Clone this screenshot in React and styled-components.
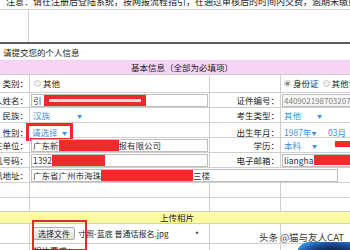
import React from 'react';
import styled, { createGlobalStyle } from 'styled-components';

const GlobalStyle = createGlobalStyle`
  html, body {
    margin: 0;
    padding: 0;
    background: #fff;
    overflow: hidden;
  }
  body {
    width: 350px;
    height: 250px;
    font-family: "Noto Sans CJK SC", "Noto Sans", sans-serif;
    font-size: 8.5px;
    color: #222;
  }
`;

const LINE = '#cfcfcf';

const Page = styled.div`
  position: relative;
  width: 350px;
  height: 250px;
  overflow: hidden;
`;

const Notice = styled.div`
  height: 14px;
  margin-top: -5px;
  padding-left: 6px;
  line-height: 14px;
  font-size: 9px;
  white-space: nowrap;
  border-bottom: 1px solid ${LINE};
`;

const UpperBlock = styled.div`
  display: grid;
  grid-template-columns: 29px 1fr;
  height: 32px;
  > div:first-child {
    border-right: 1px solid ${LINE};
  }
`;

const DarkRule = styled.div`
  height: 2px;
  background: #5c5c5c;
`;

const Intro = styled.div`
  height: 16px;
  line-height: 16px;
  padding-left: 3px;
  border-bottom: 1px solid #ead0ea;
`;

const Form = styled.div`
  margin-left: -30px;
  width: 410px;
`;

const Bar = styled.div`
  height: ${(p) => p.$h}px;
  line-height: ${(p) => p.$h}px;
  background: ${(p) => p.$bg};
  text-align: center;
  padding-left: ${(p) => p.$shift || 0}px;
  border-bottom: 1px solid ${LINE};
`;

const Row = styled.div`
  display: grid;
  grid-template-columns: 60px 180px 71px 1fr;
  height: ${(p) => p.$h || 14}px;
  border-bottom: 1px solid ${LINE};
`;

const Cell = styled.div`
  position: relative;
  display: flex;
  align-items: ${(p) => p.$align || 'center'};
  gap: ${(p) => p.$gap || 0}px;
  padding: 0 ${(p) => p.$pad ?? 3}px;
  border-right: 1px solid ${LINE};
  white-space: nowrap;
  grid-column: ${(p) => p.$span || 'auto'};
  min-width: 0;
`;

const Label = styled(Cell)`
  justify-content: flex-end;
  padding: 0 1px 0 0;
  overflow: hidden;
`;

const Radio = styled.span`
  display: inline-flex;
  align-items: center;
  gap: 2px;
  margin-right: 4px;
  &::before {
    content: '';
    width: 5px;
    height: 5px;
    border-radius: 50%;
    border: 1px solid #c8c8c8;
    background: ${(p) => (p.$on ? 'radial-gradient(circle, #8a8a8a 0 45%, #e8e8e8 55%)' : '#f2f2f2')};
  }
`;

const Select = styled.span`
  display: inline-flex;
  align-items: center;
  width: ${(p) => p.$w}px;
  color: #3d8fdb;
  &::after {
    content: '▼';
    font-size: 5px;
    margin-left: auto;
  }
`;

const Field = styled.div`
  display: flex;
  align-items: center;
  width: ${(p) => p.$w}px;
  height: 11px;
  border: 1px solid #bdbdbd;
  background: ${(p) => (p.$muted ? '#f7f7f7' : '#fff')};
  color: ${(p) => (p.$muted ? '#808080' : '#333')};
  font-size: ${(p) => (p.$muted ? 8 : 8.5)}px;
  padding-left: 1px;
  overflow: hidden;
  white-space: nowrap;
  margin-left: ${(p) => p.$ml || 0}px;
`;

const Redact = styled.span`
  display: inline-block;
  flex: none;
  width: ${(p) => p.$w}px;
  height: ${(p) => p.$h || 11}px;
  background: #ef2b2b;
  margin-top: ${(p) => p.$mt || 0}px;
`;

const NameRedact = styled.span`
  display: flex;
  align-items: center;
  justify-content: center;
  flex: none;
  width: 102px;
  height: 12px;
  margin: 0 0 0 2px;
  background: #ec2a2a;
  &::after {
    content: '';
    width: 92px;
    height: 3px;
    background: #f6d9d3;
  }
`;

const Marked = styled.span`
  display: inline-flex;
  align-items: center;
  box-sizing: border-box;
  height: 18px;
  padding: 0 3px;
  margin: 0 0 0 -7px;
  border: 3px solid #ee2a2a;
  background: #fff;
`;

const FileButton = styled.span`
  display: inline-flex;
  align-items: center;
  height: 11px;
  padding: 0 4px;
  border: 1px solid #a9a9a9;
  border-radius: 2px;
  background: linear-gradient(#f6f6f6, #dedede);
  font-size: 8px;
  color: #222;
`;

const FileName = styled.span`
  margin-left: 3px;
  font-size: 8px;
`;

const Star = styled.span`
  margin-left: auto;
  padding-right: 7px;
`;

const Outline = styled.span`
  position: absolute;
  left: 2px;
  top: -4px;
  width: 51px;
  height: 27px;
  border: 2px solid #e6262b;
  pointer-events: none;
`;

const Watermark = styled.div`
  position: absolute;
  left: 259px;
  top: 230px;
  font-size: 9.5px;
  color: #3c3c3c;
  text-shadow: 0 0 2px #fff;
  white-space: nowrap;
`;

const Avatar = styled.div`
  position: absolute;
  left: 297px;
  top: 242px;
  width: 60px;
  height: 20px;
  border-radius: 12px 0 0 0;
  background: radial-gradient(ellipse at 60% 100%, #0d1f45 0 40%, #1c4f9a 65%, #2a92e6 85%);
`;

export default function App() {
  return (
    <Page>
      <GlobalStyle />
      <Notice>注意：请在注册后登陆系统，按网报流程指引，在通过审核后的时间内交费，逾期未缴费者视为放弃报名。</Notice>
      <UpperBlock>
        <div />
        <div />
      </UpperBlock>
      <DarkRule />
      <Intro>请提交您的个人信息</Intro>

      <Form>
        <Bar $h={13} $bg="#f7d3f5" $shift={14}>基本信息（全部为必填项）</Bar>

        <Row $h={17}>
          <Label $align="flex-end" style={{ paddingBottom: 3 }}>类别：</Label>
          <Cell $align="flex-end" style={{ paddingBottom: 3, paddingLeft: 4 }}>
            <Radio>其他</Radio>
          </Cell>
          <Cell />
          <Cell $align="flex-end" style={{ paddingBottom: 3 }}>
            <Radio $on>身份证</Radio>
            <Radio>其他证件</Radio>
          </Cell>
        </Row>

        <Row>
          <Label>个人姓名：</Label>
          <Cell $pad={1}>
            <Field $w={176}>
              <span>引</span>
              <NameRedact />
            </Field>
          </Cell>
          <Label>证件编号：</Label>
          <Cell $pad={1}>
            <Field $w={90} $muted>440902198703207018</Field>
          </Cell>
        </Row>

        <Row>
          <Label>民族：</Label>
          <Cell><Select $w={49}>汉族</Select></Cell>
          <Label>考生类型：</Label>
          <Cell><Select $w={38}>其他</Select></Cell>
        </Row>

        <Row>
          <Label>性别：</Label>
          <Cell>
            <Marked><Select $w={35}>请选择</Select></Marked>
          </Cell>
          <Label>出生年月：</Label>
          <Cell $gap={12}>
            <Select $w={32}>1987年</Select>
            <Select $w={30}>03月</Select>
          </Cell>
        </Row>

        <Row>
          <Label>所在单位：</Label>
          <Cell $pad={1}>
            <Field $w={176}>
              广东新<Redact $w={60} />报有限公司
            </Field>
          </Cell>
          <Label>学历：</Label>
          <Cell>
            <Select $w={33}>本科</Select>
            <Redact $w={20} $h={6} $mt={-2} style={{ marginLeft: 18 }} />
          </Cell>
        </Row>

        <Row>
          <Label>手机号码：</Label>
          <Cell $pad={1}>
            <Field $w={176}>
              1392<Redact $w={53} />
            </Field>
          </Cell>
          <Label>电子邮箱：</Label>
          <Cell $pad={1}>
            <Field $w={90}>
              liangha<Redact $w={50} $h={10} style={{ marginLeft: 1 }} />
            </Field>
          </Cell>
        </Row>

        <Row>
          <Label>通讯地址：</Label>
          <Cell $pad={1} $span="2 / span 3" style={{ borderRight: 'none' }}>
            <Field $w={304}>
              广东省广州市海珠<Redact $w={92} />三楼
            </Field>
          </Cell>
        </Row>

        <Row>
          <Cell /><Cell /><Cell /><Cell />
        </Row>
        <Row $h={13}>
          <Cell /><Cell /><Cell /><Cell />
        </Row>

        <Bar $h={11} $bg="#fdfb9f" $shift={4}>上传相片</Bar>

        <Row $h={19}>
          <Cell />
          <Cell $pad={3}>
            <FileButton>选择文件</FileButton>
            <FileName>寸照-蓝底 普通话报名.jpg</FileName>
            <Star>*</Star>
            <Outline />
          </Cell>
          <Cell />
          <Cell />
        </Row>

        <Row>
          <Cell />
          <Cell $align="flex-start">相片要求：</Cell>
          <Cell />
          <Cell />
        </Row>
      </Form>

      <Watermark>头条 @猫与友人CAT</Watermark>
      <Avatar />
    </Page>
  );
}
